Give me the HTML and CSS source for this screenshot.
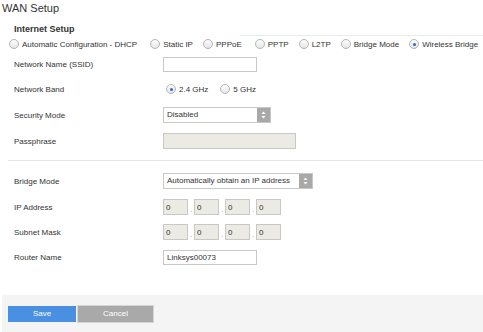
FILE: index.html
```html
<!doctype html>
<html lang="en">
  <head>
    <meta charset="UTF-8" />
    <meta name="viewport" content="width=device-width, initial-scale=1.0" />
    <title>WAN Setup</title>
    <link rel="stylesheet" href="styles.css">
  </head>
  <body>
    <h1 class="title">WAN Setup</h1>

    <div class="section-head">
      <h2>Internet Setup</h2>
    </div>

    <div class="mode-row">
      <span class="radio radio-wide"><span class="radio-dot"></span>Automatic Configuration - DHCP</span>
      <span class="radio"><span class="radio-dot"></span>Static IP</span>
      <span class="radio radio-wide"><span class="radio-dot"></span>PPPoE</span>
      <span class="radio"><span class="radio-dot"></span>PPTP</span>
      <span class="radio"><span class="radio-dot"></span>L2TP</span>
      <span class="radio"><span class="radio-dot"></span>Bridge Mode</span>
      <span class="radio"><span class="radio-dot on"></span>Wireless Bridge</span>
    </div>

    <div class="form-row form-row-short">
      <label>Network Name (SSID)</label>
      <input type="text" class="text-input" value="" />
    </div>
    <div class="form-row">
      <label>Network Band</label>
      <div class="band">
        <span class="radio"><span class="radio-dot on"></span>2.4 GHz</span>
        <span class="radio"><span class="radio-dot"></span>5 GHz</span>
      </div>
    </div>
    <div class="form-row">
      <label>Security Mode</label>
      <div class="select select-sm">
        <span class="select-text">Disabled</span>
        <span class="select-arrow">
          <svg width="5" height="8" viewBox="0 0 5 8"><path d="M2.5 0.5 L4.5 3 L0.5 3 Z M0.5 5 L4.5 5 L2.5 7.5 Z" fill="#fff"/></svg>
        </span>
      </div>
    </div>
    <div class="form-row">
      <label>Passphrase</label>
      <input type="text" class="text-input input-wide" disabled />
    </div>

    <div class="divider"></div>

    <div class="form-row">
      <label>Bridge Mode</label>
      <div class="select select-lg">
        <span class="select-text">Automatically obtain an IP address</span>
        <span class="select-arrow">
          <svg width="5" height="8" viewBox="0 0 5 8"><path d="M2.5 0.5 L4.5 3 L0.5 3 Z M0.5 5 L4.5 5 L2.5 7.5 Z" fill="#fff"/></svg>
        </span>
      </div>
    </div>
    <div class="form-row">
      <label>IP Address</label>
      <div class="ip-group">
        <input type="text" class="ip-box" value="0" disabled />
        <span class="ip-dot">.</span>
        <input type="text" class="ip-box" value="0" disabled />
        <span class="ip-dot">.</span>
        <input type="text" class="ip-box" value="0" disabled />
        <span class="ip-dot">.</span>
        <input type="text" class="ip-box" value="0" disabled />
      </div>
    </div>
    <div class="form-row form-row-short">
      <label>Subnet Mask</label>
      <div class="ip-group">
        <input type="text" class="ip-box" value="0" disabled />
        <span class="ip-dot">.</span>
        <input type="text" class="ip-box" value="0" disabled />
        <span class="ip-dot">.</span>
        <input type="text" class="ip-box" value="0" disabled />
        <span class="ip-dot">.</span>
        <input type="text" class="ip-box" value="0" disabled />
      </div>
    </div>
    <div class="form-row">
      <label>Router Name</label>
      <input type="text" class="text-input" value="Linksys00073" />
    </div>

    <div class="footer">
      <button class="btn btn-save">Save</button>
      <button class="btn btn-cancel">Cancel</button>
    </div>
  </body>
</html>
```

FILE: styles.css
```css
/* Router admin page: WAN setup panel */
body {
  margin: 0;
  width: 483px;
  height: 332px;
  display: flex;
  flex-direction: column;
  font-family: "Liberation Sans", Arial, sans-serif;
  font-size: 8px;
  color: #333;
  background-color: #fff;
}
.title {
  margin: 0;
  padding-left: 2px;
  height: 16px;
  font-size: 11px;
  font-weight: normal;
  line-height: 16px;
}
.section-head {
  display: flex;
  justify-content: space-between;
  align-items: flex-end;
  height: 14px;
  margin-top: 6px;
  padding-left: 14px;
}
.section-head h2 {
  margin: 0;
  font-size: 9px;
  font-weight: bold;
  line-height: 14px;
}
.section-head::after {
  content: "";
  width: 243px;
  border-bottom: 1px solid #e8ecef; /* faint rule on the right */
}
.mode-row {
  display: flex;
  align-items: center;
  gap: 10px;
  height: 16px;
  padding-left: 9px;
}
.radio {
  display: flex;
  align-items: center;
  gap: 3px;
  white-space: nowrap;
}
.radio-wide {
  margin-right: 3px;
}
.radio-dot {
  width: 10px;
  height: 10px;
  box-sizing: border-box;
  border: 1px solid #b4b4b4;
  border-radius: 50%;
  background: linear-gradient(#fdfdfd, #e6e6e6);
  display: flex;
  align-items: center;
  justify-content: center;
}
.radio-dot.on::after {
  content: "";
  width: 3px;
  height: 3px;
  border-radius: 50%;
  background-color: #2a6ad0;
}
.form-row {
  display: flex;
  align-items: center;
  height: 26px;
  padding-left: 14px;
}
.form-row-short {
  height: 24px;
}
.form-row label {
  width: 149px;
  flex-shrink: 0;
}
.band {
  display: flex;
  gap: 12px;
  padding-left: 3px;
}
.text-input {
  width: 94px;
  height: 15px;
  box-sizing: border-box;
  margin: 0;
  padding: 0 3px;
  border: 1px solid #c8c8c8;
  font-family: inherit;
  font-size: 8px;
  color: #333;
  background-color: #fff;
}
.text-input:disabled {
  background-color: #ebebe4;
}
.input-wide {
  width: 133px;
  height: 16px;
}
.select {
  display: flex;
  height: 16px;
  box-sizing: border-box;
  border: 1px solid #c8c8c8;
  background-color: #fff;
}
.select-sm {
  width: 108px;
}
.select-lg {
  width: 150px;
}
.select-text {
  flex: 1;
  padding-left: 3px;
  line-height: 14px;
  white-space: nowrap;
  overflow: hidden;
}
.select-arrow {
  width: 13px;
  background-color: #a8a8a8;
  display: flex;
  align-items: center;
  justify-content: center;
}
.divider {
  margin: 6px 0 7px 8px;
  border-top: 1px solid #e6e6e6;
}
.ip-group {
  display: flex;
  align-items: center;
}
.ip-box {
  width: 25px;
  height: 16px;
  box-sizing: border-box;
  margin: 0;
  padding: 0 2px;
  border: 1px solid #c8c8c8;
  font-family: inherit;
  font-size: 8px;
  color: #333;
  background-color: #ebebe4;
}
.ip-dot {
  width: 6px;
  text-align: center;
  color: #999;
  padding-top: 4px;
}
.footer {
  margin-top: auto;
  margin-left: 2px;
  height: 37px;
  display: flex;
  align-items: center;
  gap: 2px;
  padding-left: 6px;
  background-color: #f4f4f4;
}
.btn {
  height: 16px;
  padding: 0;
  border: none;
  color: #fff;
  font-family: inherit;
  font-size: 8px;
  cursor: pointer;
}
.btn-save {
  width: 68px;
  background-color: #4a90e2;
}
.btn-cancel {
  width: 75px;
  background-color: #a9a9a9;
  box-shadow: 0 0 0 1px #d6d6d6;
}
```
